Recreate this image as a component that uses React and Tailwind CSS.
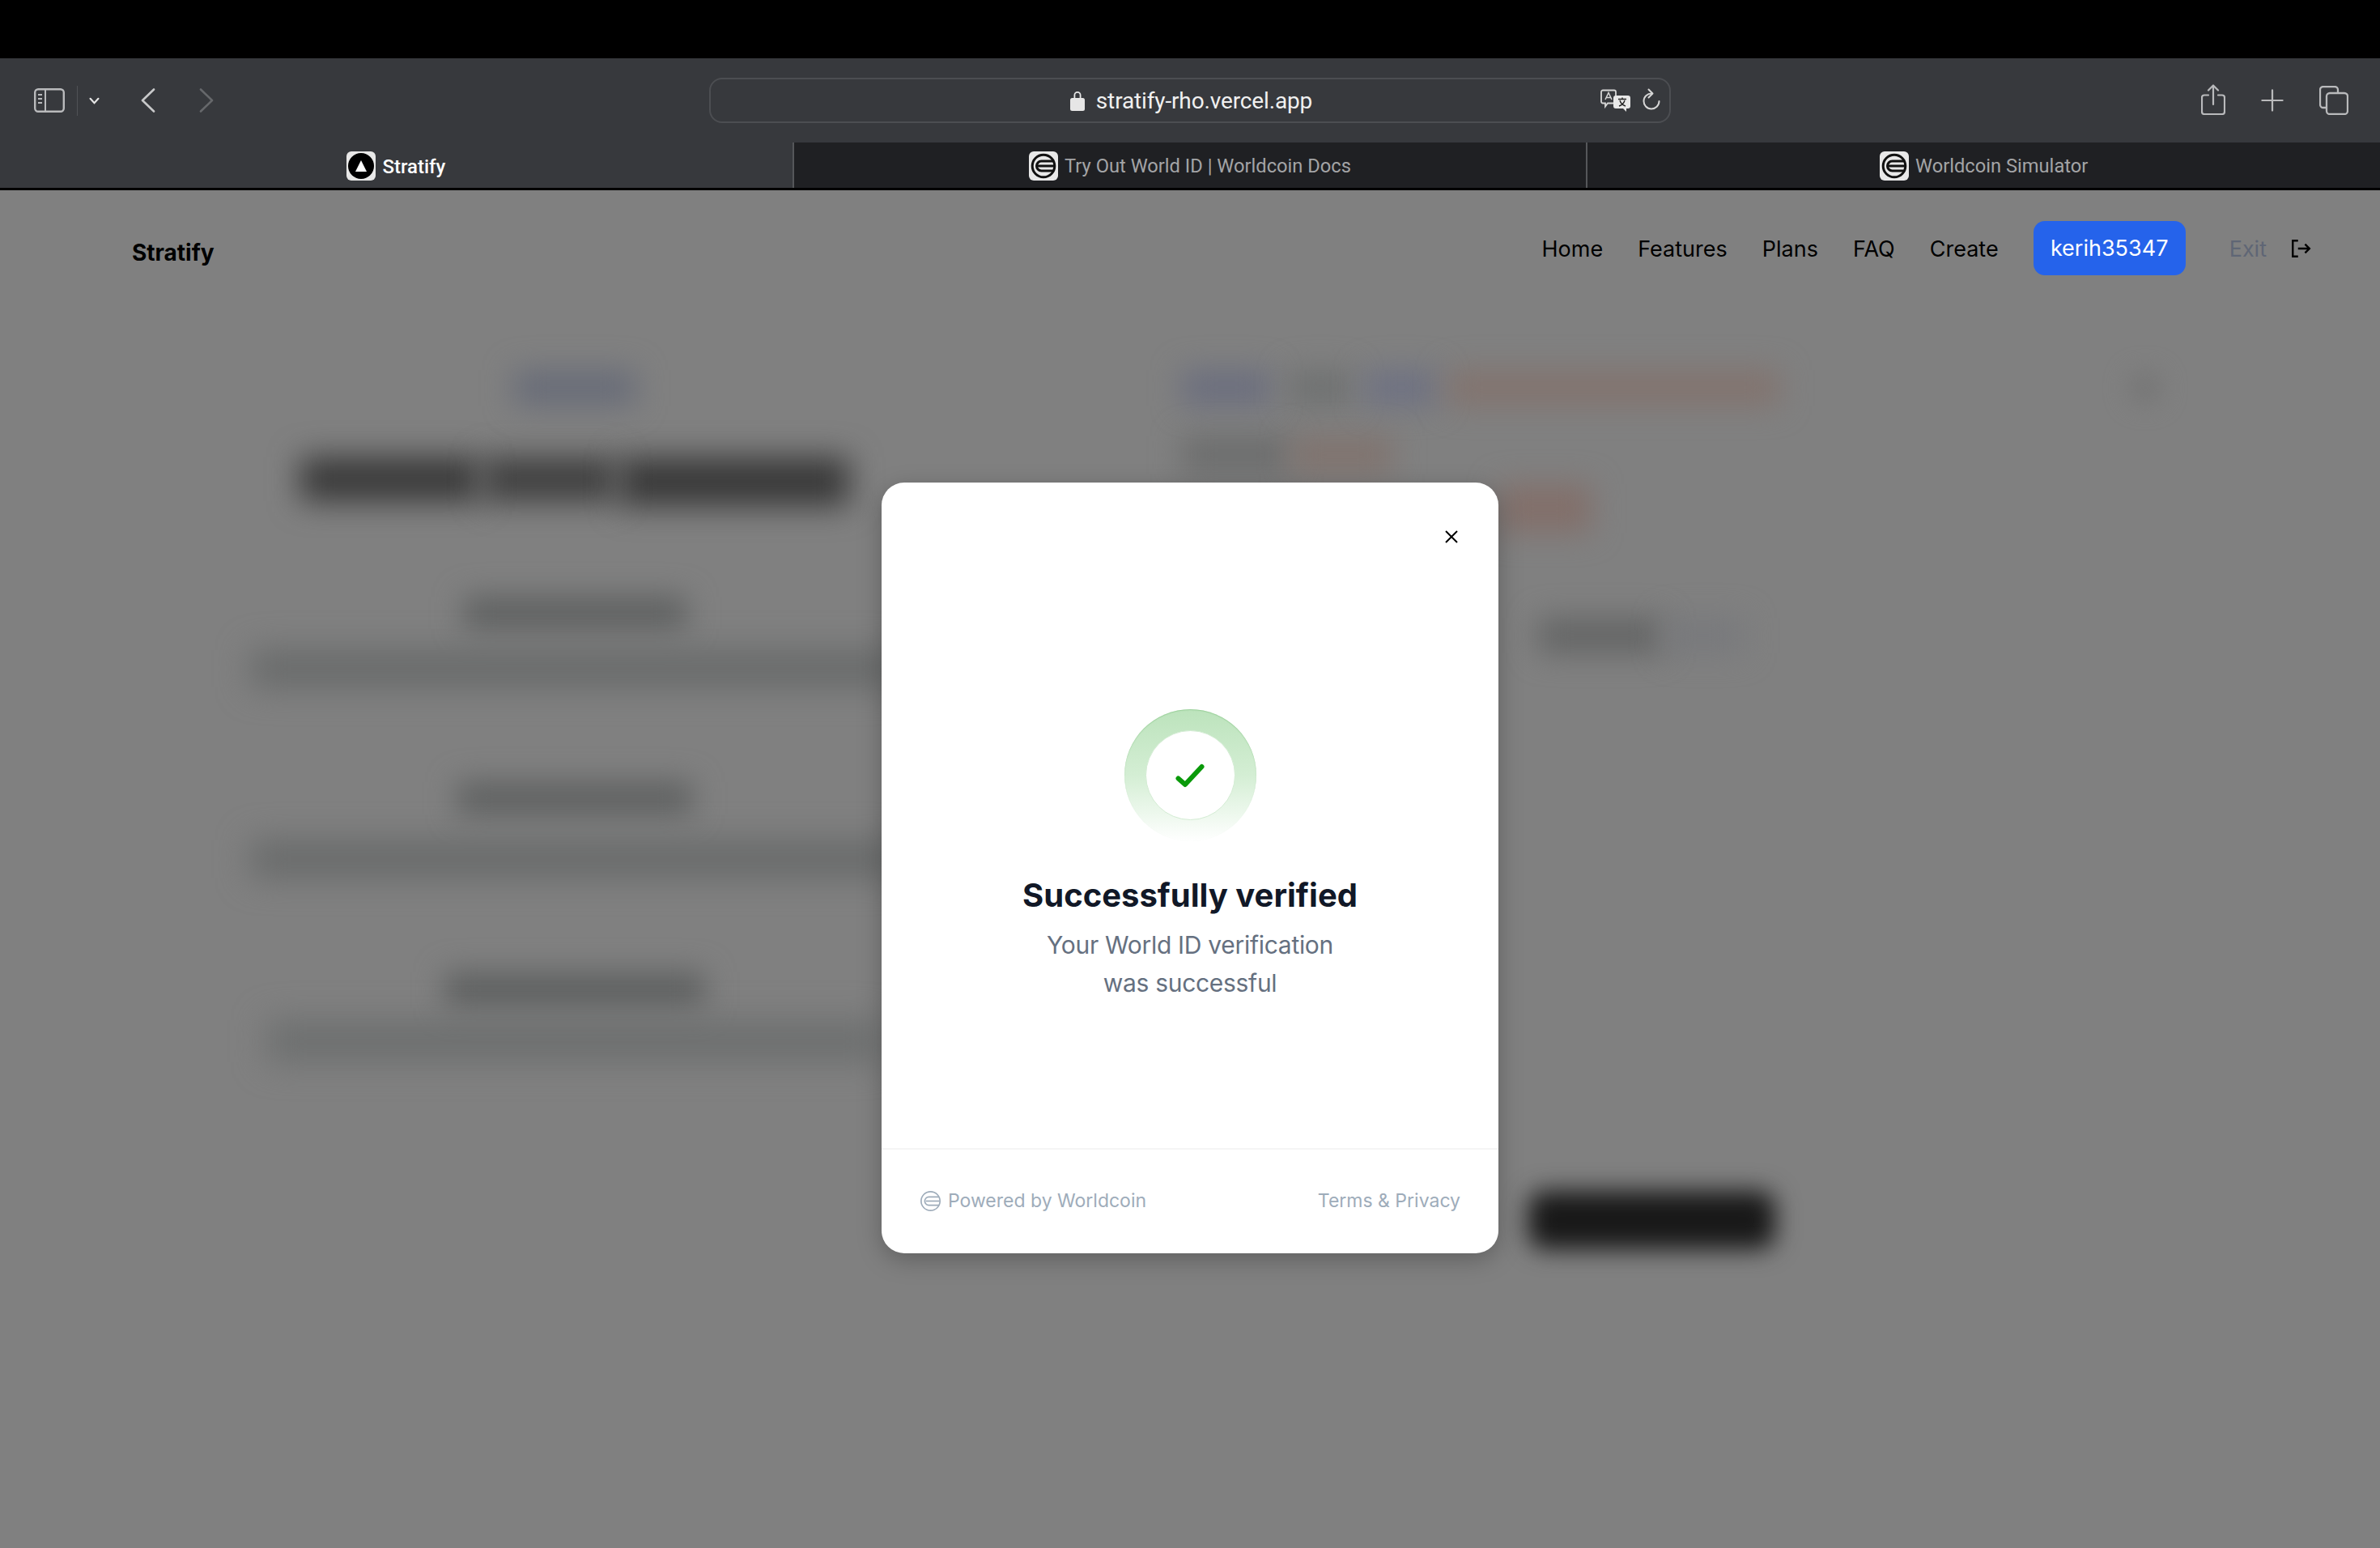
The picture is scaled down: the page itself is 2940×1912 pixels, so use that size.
import React from "react";

const WorldLogo = ({ className, width = 2 }) => (
  <svg viewBox="0 0 32 32" fill="none" stroke="currentColor" strokeWidth={width} className={className}>
    <circle cx="16" cy="16" r="13.8" />
    <path d="M29 16H9" />
    <path d="M28.500 10H13.500C10 10 7.500 13 7.500 16s2.500 6 6 6H28.500" />
  </svg>
);

const WorldFavicon = () => (
  <span className="flex h-[36px] w-[36px] items-center justify-center rounded-[6px] bg-[#e8e8e8]">
    <WorldLogo width={3} className="h-[32px] w-[32px] text-[#111]" />
  </span>
);

const StratifyFavicon = () => (
  <span className="flex h-[36px] w-[36px] items-center justify-center rounded-[6px] bg-[#e8e8e8]">
    <span className="flex h-[32px] w-[32px] items-center justify-center rounded-full bg-black">
      <svg viewBox="0 0 16 16" className="h-[16px] w-[16px]" fill="#fff">
        <path d="M8 1 15 15H1Z" />
      </svg>
    </span>
  </span>
);

const Tab = ({ icon, label, active }) => (
  <div
    className={
      active
        ? "flex flex-1 items-center justify-center gap-[8px] bg-[#37393d] pt-[2px] text-[24px] font-medium text-white"
        : "flex flex-1 items-center justify-center gap-[8px] border-l-2 border-[#55575a] bg-[#1f2023] pt-[2px] text-[23.7px] text-[#a3a4a6]"
    }
  >
    {icon}
    <span className="pt-[2px]">{label}</span>
  </div>
);

const Toolbar = () => (
  <div className="grid h-[104px] grid-cols-[876px_1188px_1fr] items-center bg-[#37393d] text-[#b9babc]">
    <div className="flex items-center pl-[42px]">
      <svg viewBox="0 0 38 30" fill="none" stroke="currentColor" className="h-[30px] w-[38px]">
        <rect x="1.2" y="1.2" width="35.6" height="27.6" rx="4" strokeWidth="2.4" />
        <path d="M14 1.2v27.6" strokeWidth="2" />
        <path d="M5 8h5M5 13h5M5 18h5" strokeWidth="2" />
      </svg>
      <span className="ml-[15px] h-[37px] w-[1px] bg-[#505256]" />
      <svg viewBox="0 0 14 10" fill="none" stroke="#e6e6e6" strokeWidth="2.4" strokeLinecap="round" className="ml-[14px] h-[9px] w-[13px]">
        <path d="M1.5 2 7 8l5.5-6" />
      </svg>
      <svg viewBox="0 0 18 30" fill="none" stroke="#c8c9ca" strokeWidth="2.6" strokeLinecap="round" strokeLinejoin="round" className="ml-[51px] h-[30px] w-[18px]">
        <path d="M16 1.500 2 15l14 13.500" />
      </svg>
      <svg viewBox="0 0 18 30" fill="none" stroke="#66686b" strokeWidth="2.6" strokeLinecap="round" strokeLinejoin="round" className="ml-[54px] h-[30px] w-[18px]">
        <path d="M2 1.500 16 15 2 28.500" />
      </svg>
    </div>

    <div className="relative flex h-[56px] items-center justify-center rounded-[16px] border-2 border-[#4c4e52]">
      <svg viewBox="0 0 18 26" className="ml-[3px] h-[26px] w-[18px]" fill="#e6e6e6">
        <path d="M4.500 11V6.500a4.500 4.500 0 0 1 9 0V11h-1.800V6.500a2.700 2.700 0 0 0-5.400 0V11Z" />
        <rect x="0" y="10" width="18" height="16" rx="2.500" />
      </svg>
      <span className="ml-[14px] pt-[2px] font-['Roboto',sans-serif] text-[28px] tracking-[-0.005em] text-[#f0f0f0]">stratify-rho.vercel.app</span>
      <div className="absolute right-[10px] top-[10px] flex items-center gap-[13px]">
        <svg viewBox="0 0 38 28" className="ml-[2px] mt-[2px] h-[28px] w-[38px]" fill="none">
          <path d="M3 1.500h14a2 2 0 0 1 2 2v12a2 2 0 0 1-2 2H9l-3 4v-4H3a2 2 0 0 1-2-2v-12a2 2 0 0 1 2-2Z" stroke="#d6d6d6" strokeWidth="1.800" />
          <path d="M6 13 10 4.500 14 13M7.500 10.500h5" stroke="#d6d6d6" strokeWidth="1.500" />
          <path d="M19 8h15a3 3 0 0 1 3 3v10a3 3 0 0 1-3 3h-2v4l-4-4h-9a3 3 0 0 1-3-3V11a3 3 0 0 1 3-3Z" fill="#e8e8e8" />
          <path d="M22 12.500h10M27 10.500v2M24 14c1 3.500 4 6 7 7M30 14c-1 3.500-4 6-7 7" stroke="#222" strokeWidth="1.400" />
        </svg>
        <svg viewBox="0 0 24 28" fill="none" stroke="#d6d6d6" strokeWidth="2" strokeLinecap="round" strokeLinejoin="round" className="h-[28px] w-[24px]">
          <path d="M12.500 6.500A9.500 9.500 0 1 0 21.500 16" />
          <path d="M8.500 1.500l5 5-5 5" />
        </svg>
      </div>
    </div>

    <div className="flex items-center justify-end pr-[39px]">
      <svg viewBox="0 0 30 38" fill="none" stroke="currentColor" strokeWidth="2.2" strokeLinecap="round" strokeLinejoin="round" className="mb-[3px] h-[38px] w-[30px]">
        <path d="M9 13.500H4a3 3 0 0 0-3 3V34a3 3 0 0 0 3 3h22a3 3 0 0 0 3-3V16.500a3 3 0 0 0-3-3h-5" />
        <path d="M15 25V2M9 7.500 15 1.500l6 6" />
      </svg>
      <svg viewBox="0 0 30 30" fill="none" stroke="currentColor" strokeWidth="2.4" strokeLinecap="round" className="ml-[44px] h-[28px] w-[28px]">
        <path d="M15 1.500v27M1.500 15h27" />
      </svg>
      <svg viewBox="0 0 36 36" fill="none" stroke="currentColor" strokeWidth="2.3" className="ml-[44px] h-[36px] w-[36px]">
        <path d="M8 27H5a4 4 0 0 1-4-4V5a4 4 0 0 1 4-4h14a4 4 0 0 1 4 4v3" />
        <rect x="9" y="9" width="26" height="26" rx="4" />
      </svg>
    </div>
  </div>
);

const Blob = ({ className }) => <div className={className} />;

// everything behind the modal is only seen through a heavy blur
const Backdrop = () => (
  <div className="flex pt-[117px]">
    <section className="ml-[300px] flex w-[820px] shrink-0 flex-col items-center">
      <Blob className="h-[44px] w-[150px] bg-[#686c78] blur-[18px]" />
      <div className="mt-[64px] flex gap-[4px]">
        <Blob className="h-[54px] w-[222px] bg-[#383838] blur-[19px]" />
        <Blob className="h-[54px] w-[164px] bg-[#3e3e3e] blur-[19px]" />
        <Blob className="h-[60px] w-[284px] bg-[#383838] blur-[19px]" />
      </div>
      <Blob className="mt-[112px] h-[40px] w-[275px] bg-[#5e6060] blur-[18px]" />
      <Blob className="mt-[26px] h-[46px] w-[800px] bg-[#686a6a] blur-[20px]" />
      <Blob className="mt-[117px] h-[40px] w-[290px] bg-[#5e6060] blur-[18px]" />
      <Blob className="mt-[32px] h-[46px] w-[800px] bg-[#686a6a] blur-[20px]" />
      <Blob className="mt-[117px] h-[44px] w-[320px] bg-[#5e6060] blur-[18px]" />
      <Blob className="mt-[15px] h-[52px] w-[760px] bg-[#6d6f6f] blur-[20px]" />
    </section>
    <section className="ml-[340px] flex w-[1300px] shrink-0 flex-col">
      <div className="flex items-start">
        <Blob className="h-[44px] w-[110px] shrink-0 bg-[#6b6e7e] blur-[18px]" />
        <Blob className="ml-[22px] h-[44px] w-[78px] shrink-0 bg-[#6f7171] blur-[18px]" />
        <Blob className="ml-[16px] h-[44px] w-[90px] shrink-0 bg-[#6e7182] blur-[18px]" />
        <Blob className="ml-[12px] h-[44px] w-[410px] shrink-0 bg-[#82736e] blur-[18px]" />
        <Blob className="ml-[430px] h-[44px] w-[44px] shrink-0 rounded-full bg-[#777] blur-[14px]" />
      </div>
      <div className="mt-[38px] flex">
        <Blob className="h-[46px] w-[135px] bg-[#6c6d6d] blur-[18px]" />
        <Blob className="h-[46px] w-[125px] bg-[#80736e] blur-[18px]" />
      </div>
      <Blob className="ml-[391px] mt-[13px] h-[60px] w-[115px] bg-[#826f6a] blur-[18px]" />
      <div className="ml-[440px] mt-[105px] flex">
        <Blob className="h-[44px] w-[155px] bg-[#646565] blur-[18px]" />
        <Blob className="h-[44px] w-[100px] bg-[#78797c] blur-[18px]" />
      </div>
      <Blob className="ml-[428px] mt-[664px] h-[72px] w-[305px] rounded-[20px] bg-[#181818] blur-[15px]" />
    </section>
  </div>
);

const Modal = () => (
  <div className="absolute left-[1089px] top-[596px] flex h-[952px] w-[762px] flex-col rounded-[28px] bg-white font-['Inter',sans-serif] shadow-[0_8px_30px_rgba(0,0,0,0.25)]">
    <button className="absolute right-[50px] top-[59px] text-black">
      <svg viewBox="0 0 16 16" fill="none" stroke="currentColor" strokeWidth="2" className="h-[16px] w-[16px]">
        <path d="M1 1l14 14M15 1 1 15" />
      </svg>
    </button>

    <div className="flex flex-1 flex-col items-center pt-[280px]">
      <div className="flex h-[163px] w-[163px] justify-center rounded-full bg-linear-to-b from-[#bce3bc] via-[#d4eed4] to-white pt-[26px] shadow-[inset_0_1px_1px_rgba(120,190,120,0.5)]">
        <div className="flex h-[111px] w-[111px] items-center justify-center rounded-full border border-[#d3ecd3] bg-white">
          <svg viewBox="0 0 36 30" fill="none" stroke="#0a9a0a" strokeWidth="6" strokeLinecap="round" strokeLinejoin="round" className="h-[30px] w-[36px]">
            <path d="M3.500 18.500 12 26 32.500 4" />
          </svg>
        </div>
      </div>
      <h2 className="mt-[42px] text-[40px] font-bold leading-[50px] text-[#111827]">Successfully verified</h2>
      <p className="mt-[13px] text-center text-[30px] leading-[47px] tracking-[-0.01em] text-[#657080]">
        Your World ID verification
        <br />
        was successful
      </p>
    </div>

    <div className="flex h-[130px] items-center justify-between border-t-2 border-[#f5f5f5] px-[47px] pb-[2px] text-[23px] text-[#9eacba]">
      <div className="flex items-center gap-[8px]">
        <WorldLogo className="h-[27px] w-[27px]" />
        <span>Powered by Worldcoin</span>
      </div>
      <span>Terms &amp; Privacy</span>
    </div>
  </div>
);

export default function App() {
  return (
    <div className="relative h-[1912px] w-[2940px] overflow-hidden bg-[#808080] font-['Inter',sans-serif]">
      <div className="h-[72px] bg-black" />
      <Toolbar />
      <div className="flex h-[59px] border-b-[3px] border-black font-['Roboto',sans-serif]">
        <Tab active icon={<StratifyFavicon />} label="Stratify" />
        <Tab icon={<WorldFavicon />} label="Try Out World ID | Worldcoin Docs" />
        <Tab icon={<WorldFavicon />} label="Worldcoin Simulator" />
      </div>

      <header className="flex items-start justify-between pl-[163px] pr-[85px] pt-[38px] text-[27px] text-black">
        <span className="mt-[18px] text-[28px] font-bold">Stratify</span>
        <nav className="flex items-center">
          <a className="pt-[3px]">Home</a>
          <a className="ml-[43px] pt-[3px]">Features</a>
          <a className="ml-[43px] pt-[3px]">Plans</a>
          <a className="ml-[43px] pt-[3px]">FAQ</a>
          <a className="ml-[43px] pt-[3px]">Create</a>
          <a className="ml-[43px] flex h-[67px] w-[188px] items-center justify-center rounded-[14px] bg-[#2563eb] pt-[2px] text-white">kerih35347</a>
          <a className="ml-[54px] pt-[3px] text-[#5f6675]">Exit</a>
          <svg viewBox="0 0 24 24" fill="none" stroke="currentColor" strokeWidth="2.2" className="ml-[29px] h-[26px] w-[26px]">
            <path d="M9 3H3v18h6M9 12h13M17 7l5 5-5 5" />
          </svg>
        </nav>
      </header>

      <Backdrop />
      <Modal />
    </div>
  );
}
